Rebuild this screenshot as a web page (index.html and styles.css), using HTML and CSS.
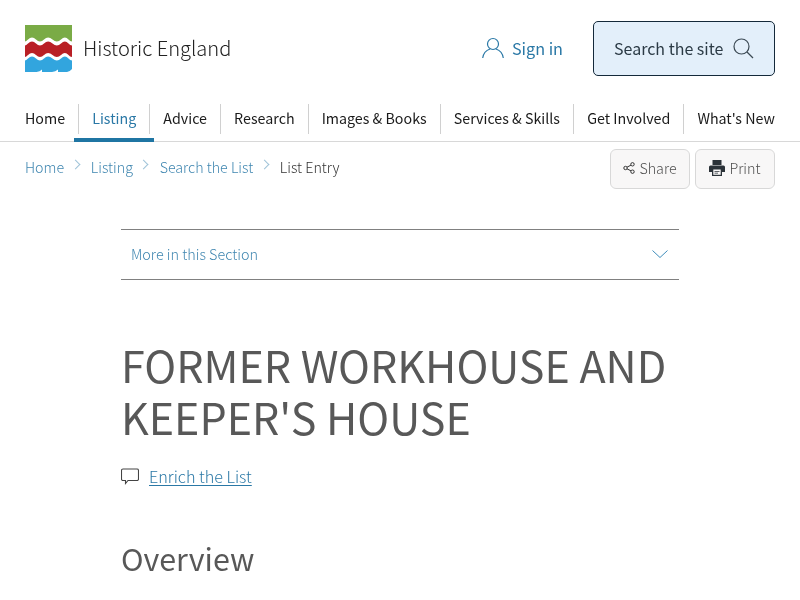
FILE: index.html
```html
<!DOCTYPE html>
<html lang="en">
<head>
  <meta charset="UTF-8" />
  <title>Former Workhouse and Keeper's House | Historic England</title>
  <link rel="stylesheet" href="styles.css">
</head>
<body>
  <header class="site-header">
    <a class="logo" href="#">
      <svg class="logo-mark" width="47" height="47" viewBox="0 0 47 47">
        <path fill="#7aab46" d="M0 16.500Q1 16.500 3 14.500Q7 10.500 11 14.500Q15 18.500 19 14.500Q23 10.500 27.500 14.500Q32 18.500 36 14.500Q40 10.500 43.500 14.500Q45 16.500 47 16.500V0H0Z"/>
        <path fill="#b92025" d="M0 20.500Q1 20.500 3 18.500Q7 14.500 11 18.500Q15 22.500 19 18.500Q23 14.500 27.500 18.500Q32 22.500 36 18.500Q40 14.500 43.500 18.500Q45 20.500 47 20.500V32Q45 32 43.500 30Q40 26 36 30Q32 34 27.500 30Q23 26 19 30Q15 34 11 30Q7 26 3 30Q1 32 0 32Z"/>
        <path fill="#32a5de" d="M0 35.500Q1 35.500 3 33.500Q7 29.500 11 33.500Q15 37.500 19 33.500Q23 29.500 27.500 33.500Q32 37.500 36 33.500Q40 29.500 43.500 33.500Q45 35.500 47 35.500V44Q45 46.500 42 47H33V44.500Q30.500 46.500 27 47H17V44.500Q15 46.500 11.500 47H0Z"/>
      </svg>
      <span class="logo-text">Historic England</span>
    </a>
    <div class="header-actions">
      <a class="sign-in" href="#">
        <svg width="22" height="22" viewBox="0 0 22 22" fill="none" stroke="#2a78a6" stroke-width="1.200">
          <circle cx="11" cy="7" r="5.500"/>
          <path d="M0.700 21C1.500 15.500 5 13 8 12M21.300 21C20.500 15.500 17 13 14 12"/>
        </svg>
        Sign in
      </a>
      <a class="search-btn" href="#">
        Search the site
        <svg width="21" height="21" viewBox="0 0 21 21" fill="none" stroke="#3c4a54" stroke-width="1.200">
          <circle cx="8.500" cy="8.500" r="7.500"/>
          <path d="M14 14L20 20"/>
        </svg>
      </a>
    </div>
  </header>

  <nav class="main-nav">
    <ul>
      <li><a href="#">Home</a></li>
      <li class="active"><a href="#">Listing</a></li>
      <li><a href="#">Advice</a></li>
      <li><a href="#">Research</a></li>
      <li><a href="#">Images &amp; Books</a></li>
      <li><a href="#">Services &amp; Skills</a></li>
      <li><a href="#">Get Involved</a></li>
      <li><a href="#">What's New</a></li>
    </ul>
  </nav>

  <div class="subbar">
    <ol class="breadcrumb">
      <li><a href="#">Home</a></li>
      <li><a href="#">Listing</a></li>
      <li><a href="#">Search the List</a></li>
      <li>List Entry</li>
    </ol>
    <div class="tools">
      <button class="tool-btn">
        <svg width="12" height="12" viewBox="0 0 12 12" fill="none" stroke="#333" stroke-width="1">
          <circle cx="2.500" cy="6" r="1.700"/>
          <circle cx="9.500" cy="2.300" r="1.700"/>
          <circle cx="9.500" cy="9.700" r="1.700"/>
          <path d="M4 5.200L8 3.100M4 6.800L8 8.900"/>
        </svg>
        Share
      </button>
      <button class="tool-btn">
        <svg width="16" height="16" viewBox="0 0 16 16">
          <path fill="#2b3238" d="M3.500 0H12.500V5H3.500ZM1.500 5.500H14.500A1.500 1.500 0 0 1 16 7V12H13V16H3V12H0V7A1.500 1.500 0 0 1 1.500 5.500Z"/>
          <path fill="#f8f7f7" d="M4.300 9.500H11.700V14.800H4.300Z"/>
          <path fill="#2b3238" d="M5.500 11H10.500V11.800H5.500ZM5.500 12.800H9V13.500H5.500Z"/>
        </svg>
        Print
      </button>
    </div>
  </div>

  <main class="content">
    <div class="section-toggle">
      <a href="#">More in this Section</a>
      <svg width="16" height="10" viewBox="0 0 16 10" fill="none" stroke="#3f8dbb" stroke-width="1">
        <path d="M0.500 1.500L8 8.500 15.500 1.500"/>
      </svg>
    </div>

    <h1>FORMER WORKHOUSE AND KEEPER'S HOUSE</h1>

    <div class="enrich">
      <svg width="18" height="17" viewBox="0 0 18 17" fill="none" stroke="#444" stroke-width="1.100">
        <path d="M2 1H16A1.500 1.500 0 0 1 17.500 2.500V11A1.500 1.500 0 0 1 16 12.500H7L4.500 15.500V12.500H2A1.500 1.500 0 0 1 0.500 11V2.500A1.500 1.500 0 0 1 2 1Z"/>
      </svg>
      <a href="#">Enrich the List</a>
    </div>

    <h2>Overview</h2>
  </main>
</body>
</html>
```

FILE: styles.css
```css
* {
  margin: 0;
  padding: 0;
  box-sizing: border-box;
}

html, body {
  height: 100%;
  overflow: hidden;
}

body {
  font-family: "Noto Sans CJK JP", "Open Sans", sans-serif;
  font-size: 14.250px;
  line-height: 24px;
  color: #505050;
  background: #fff;
}

/* own layers, so text renders with greyscale antialiasing */
body > * {
  will-change: opacity;
}

a {
  text-decoration: none;
  color: #2a78a6;
}

ul, ol {
  list-style: none;
}

/* Header */
.site-header {
  display: flex;
  justify-content: space-between;
  align-items: flex-start;
  padding: 21px 25px 0;
  height: 104px;
}

.logo {
  display: flex;
  align-items: center;
  margin-top: 4px;
  color: #222;
}

.logo-text {
  font-weight: 300;
  font-size: 20.100px;
  margin-left: 11px;
  padding-bottom: 2px;
}

.header-actions {
  display: flex;
  align-items: center;
  gap: 30px;
}

.sign-in {
  display: flex;
  align-items: center;
  gap: 8px;
  padding-bottom: 2px;
  font-size: 16.200px;
}

.search-btn {
  display: flex;
  align-items: center;
  justify-content: space-between;
  width: 182px;
  height: 55px;
  padding: 0 20px 1px;
  font-size: 16px;
  white-space: nowrap;
  color: #2b3a45;
  background: #e3effa;
  border: 1px solid #14293a;
  border-radius: 5px;
}

/* Main nav */
.main-nav {
  border-bottom: 1px solid #d8d8d8;
  height: 38px;
  padding: 0 25px;
}

.main-nav ul {
  display: flex;
  justify-content: space-between;
}

.main-nav li {
  position: relative;
  flex: none;
  padding: 0 13px;
  border-right: 1px solid #d0d0d0;
  height: 30px;
  line-height: 28px;
}

.main-nav li:first-child {
  padding-left: 0;
}

.main-nav li:last-child {
  padding-right: 0;
  border-right: 0;
}

.main-nav a {
  color: #1a1a1a;
}

.main-nav .active a {
  color: #2a78a6;
}

.main-nav .active::after {
  content: "";
  position: absolute;
  left: -5px;
  right: -5px;
  top: 34px;
  height: 4px;
  background: #1f75a3;
}

/* Breadcrumb and tools */
.subbar {
  display: flex;
  justify-content: space-between;
  align-items: flex-start;
  padding: 7px 25px 0;
}

.breadcrumb {
  display: flex;
  margin-top: 6px;
  font-weight: 300;
  color: #333;
}

.breadcrumb li {
  display: flex;
}

.breadcrumb a {
  color: #3f86b0;
}

.breadcrumb li + li::before {
  content: "";
  width: 6px;
  height: 6px;
  margin: 6px 12.200px 0 7.500px;
  border-top: 1px solid #9fc3d8;
  border-right: 1px solid #9fc3d8;
  transform: rotate(45deg);
}

.tools {
  display: flex;
  gap: 5px;
}

.tool-btn {
  display: flex;
  align-items: center;
  justify-content: center;
  gap: 4px;
  width: 80px;
  height: 40px;
  padding-bottom: 4px;
  font-family: inherit;
  font-size: 14.300px;
  font-weight: 300;
  color: #505050;
  background: #f8f7f7;
  border: 1px solid #d8d8d8;
  border-radius: 6px;
}

.tool-btn svg {
  margin-top: 2px;
}

/* Content */
.content {
  width: 558px;
  margin: 0 auto;
  padding-top: 40px;
}

.section-toggle {
  display: flex;
  justify-content: space-between;
  align-items: center;
  height: 51px;
  padding: 0 11px 2px 10px;
  border-top: 1px solid #808080;
  border-bottom: 1px solid #808080;
  font-weight: 300;
  font-size: 14.400px;
}

.section-toggle a {
  color: #3f86b0;
}

h1 {
  margin-top: 58px;
  font-size: 43px;
  line-height: 52px;
  font-weight: 400;
  color: #585858;
}

.enrich {
  display: flex;
  align-items: center;
  gap: 10px;
  margin-top: 22px;
  font-size: 16.200px;
  font-weight: 300;
}

.enrich a {
  text-decoration: underline;
  text-underline-offset: 2px;
}

h2 {
  margin-top: 50px;
  font-size: 30.400px;
  line-height: 40px;
  font-weight: 400;
  color: #585858;
}
```
